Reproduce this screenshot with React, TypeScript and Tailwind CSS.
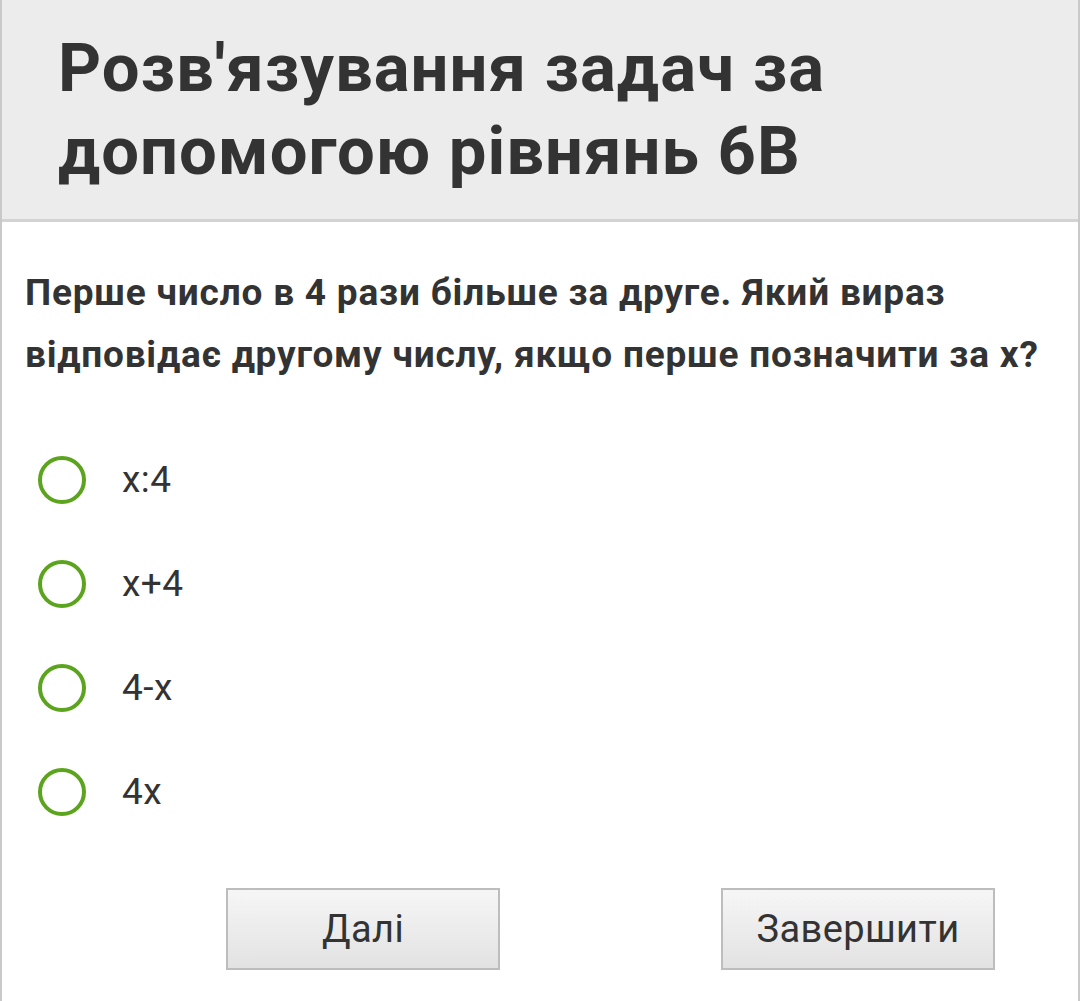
import React from "react";

const options = ["x:4", "x+4", "4-x", "4x"];

export default function App() {
  return (
    <div
      className="w-[1080px] h-[1001px] bg-white border-l-2 border-r-2 border-[#c9c9c9] overflow-hidden text-[#333333]"
      style={{ fontFamily: "Roboto, 'Noto Sans', sans-serif" }}
    >
      <div className="bg-[#ececec] border-b-[3px] border-[#d3d3d3] pl-[56px] pt-[27px] pb-[26px]">
        <h1 className="text-[67px] leading-[83px] font-bold tracking-[1px] text-[#333333]">
          Розв'язування задач за
          <br />
          допомогою рівнянь 6В
        </h1>
      </div>
      <div className="pl-[23px] pt-[40px]">
        <p className="text-[37px] leading-[62px] font-bold tracking-[0.8px]">
          Перше число в 4 рази більше за друге. Який вираз
          <br />
          відповідає другому числу, якщо перше позначити за x?
        </p>
      </div>
      <div className="mt-[42px] flex flex-col">
        {options.map((o) => (
          <div key={o} className="h-[104px] flex items-center pl-[36px]">
            <div className="w-[48px] h-[48px] rounded-full border-[4px] border-[#5ca41e] bg-white" />
            <span className="ml-[36px] text-[37px] tracking-[0.5px]">{o}</span>
          </div>
        ))}
      </div>
      <div className="mt-[44px] flex pl-[224px] gap-[221px]">
        <button className="w-[274px] h-[82px] border-2 border-[#bdbdbd] bg-gradient-to-b from-[#f6f6f6] to-[#e2e2e2] text-[38px] tracking-[0.4px] text-[#333333]">
          Далі
        </button>
        <button className="w-[274px] h-[82px] border-2 border-[#bdbdbd] bg-gradient-to-b from-[#f6f6f6] to-[#e2e2e2] text-[38px] tracking-[0.4px] text-[#333333]">
          Завершити
        </button>
      </div>
    </div>
  );
}
